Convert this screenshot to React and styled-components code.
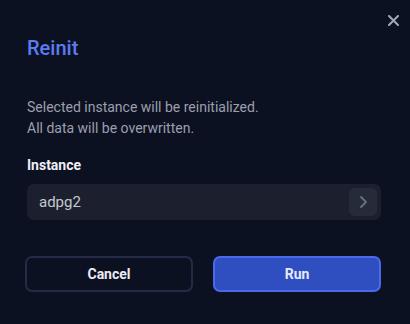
import React from "react";
import styled, { createGlobalStyle } from "styled-components";

const Global = createGlobalStyle`
  html, body { margin: 0; padding: 0; background: #0c1122; }
  body { font-family: Roboto, "Liberation Sans", sans-serif; -webkit-font-smoothing: antialiased; }
  * { box-sizing: border-box; }
`;

const Dialog = styled.div`
  position: relative;
  width: 410px;
  height: 324px;
  background: #0c1122;
  padding: 35px 29px 0 27px;
  display: flex;
  flex-direction: column;
`;

const Close = styled.button`
  position: absolute;
  top: 13px;
  right: 10px;
  width: 14px;
  height: 14px;
  padding: 0;
  border: 0;
  background: none;
  color: #a3a8b6;
  display: flex;
  align-items: center;
  justify-content: center;
  cursor: pointer;
`;

const Title = styled.h2`
  margin: 0;
  font-size: 20px;
  line-height: 26px;
  font-weight: 500;
  color: #5b7cf2;
`;

const Description = styled.p`
  margin: 36px 0 0;
  font-size: 14px;
  line-height: 21px;
  color: #9c9fac;
`;

const Label = styled.label`
  margin-top: 16px;
  font-size: 14px;
  line-height: 21px;
  font-weight: 700;
  color: #eef0f5;
`;

const Field = styled.div`
  margin-top: 8px;
  height: 36px;
  border-radius: 7px;
  background: #1c202e;
  display: flex;
  align-items: center;
  justify-content: space-between;
  padding: 0 4px 0 12px;
`;

const Value = styled.span`
  font-size: 15px;
  color: #c6c8d0;
`;

const ChevronButton = styled.button`
  width: 28px;
  height: 28px;
  border: 0;
  border-radius: 6px;
  background: #262b3a;
  color: #6b7080;
  display: flex;
  align-items: center;
  justify-content: center;
  padding: 0;
`;

const Footer = styled.div`
  margin: 36px 0 0 -2px;
  display: grid;
  grid-template-columns: 168px 168px;
  gap: 20px;
`;

const Button = styled.button`
  height: 36px;
  border-radius: 7px;
  font-family: inherit;
  font-size: 14px;
  font-weight: 700;
  cursor: pointer;
  border: 2px solid ${(p) => (p.$primary ? "#4c69ee" : "#262a48")};
  background: ${(p) => (p.$primary ? "#2f4fc1" : "transparent")};
  color: ${(p) => (p.$primary ? "#e6eaff" : "#ececf2")};
`;

export default function App() {
  return (
    <>
      <Global />
      <Dialog>
        <Close aria-label="Close">
          <svg width="11" height="11" viewBox="0 0 11 11">
            <path d="M1 1L10 10M10 1L1 10" stroke="currentColor" strokeWidth="2" strokeLinecap="round" />
          </svg>
        </Close>
        <Title>Reinit</Title>
        <Description>
          Selected instance will be reinitialized.
          <br />
          All data will be overwritten.
        </Description>
        <Label>Instance</Label>
        <Field>
          <Value>adpg2</Value>
          <ChevronButton>
            <svg width="10" height="14" viewBox="0 0 10 14">
              <path d="M3 2L8 7L3 12" fill="none" stroke="currentColor" strokeWidth="1.8" strokeLinecap="round" strokeLinejoin="round" />
            </svg>
          </ChevronButton>
        </Field>
        <Footer>
          <Button>Cancel</Button>
          <Button $primary>Run</Button>
        </Footer>
      </Dialog>
    </>
  );
}
